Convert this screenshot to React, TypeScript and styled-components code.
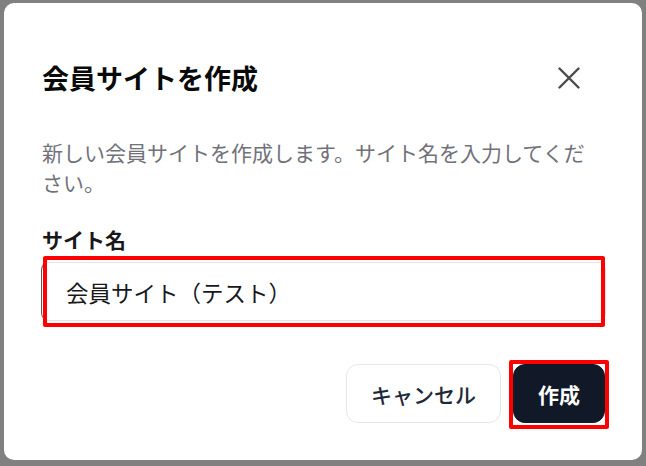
import styled, { createGlobalStyle } from 'styled-components'
import { useState } from 'react'

const GlobalStyle = createGlobalStyle`
  html, body {
    margin: 0;
    padding: 0;
    background: #808080;
  }
  body {
    font-family: "Noto Sans CJK JP", "Noto Sans", sans-serif;
  }
`

const Overlay = styled.div`
  width: 646px;
  height: 466px;
  box-sizing: border-box;
  padding: 3px 4px 6px 4px;
  background: #808080;
`

const Dialog = styled.div`
  box-sizing: border-box;
  height: 457px;
  background: #ffffff;
  border-radius: 10px;
  padding: 54px 37px 37px 37px;
  display: flex;
  flex-direction: column;
`

const Header = styled.div`
  display: flex;
  align-items: center;
  justify-content: space-between;
  height: 42px;
`

const Title = styled.h2`
  margin: 0;
  font-size: 27px;
  line-height: 42px;
  font-weight: 700;
  color: #0a0a0a;
  padding-left: 1px;
`

const CloseButton = styled.button`
  border: none;
  background: none;
  padding: 0;
  margin-right: 25px;
  width: 22px;
  height: 22px;
  display: flex;
  color: #4b4b4b;
  cursor: pointer;
`

const Description = styled.p`
  margin: 38px 0 0 0;
  font-size: 21px;
  line-height: 30px;
  color: #71717a;
  padding-left: 1px;
`

const Label = styled.label`
  display: block;
  margin-top: 27px;
  font-size: 21px;
  line-height: 30px;
  font-weight: 600;
  color: #18181b;
  padding-left: 1px;
`

const Field = styled.div`
  position: relative;
  margin-top: 8px;
  margin-right: -1px;
`

const Input = styled.input`
  display: block;
  box-sizing: border-box;
  width: 100%;
  height: 59px;
  border: 1px solid #e4e4e7;
  border-left-color: #5a5a5a;
  border-radius: 8px;
  padding: 0 0 0 24px;
  font-family: inherit;
  font-size: 22.5px;
  color: #18181b;
  outline: none;
  background: #fff;
`

const Highlight = styled.div<{ $top: number; $right: number; $bottom: number; $left: number }>`
  position: absolute;
  top: ${(p) => p.$top}px;
  right: ${(p) => p.$right}px;
  bottom: ${(p) => p.$bottom}px;
  left: ${(p) => p.$left}px;
  border: 4px solid #ff0000;
  border-radius: 2px;
  pointer-events: none;
`

const Footer = styled.div`
  margin-top: 43px;
  display: flex;
  justify-content: flex-end;
  gap: 12px;
`

const Button = styled.button<{ $primary?: boolean }>`
  position: relative;
  box-sizing: border-box;
  height: 59px;
  padding: 0 24px;
  border-radius: 12px;
  font-family: inherit;
  font-size: 21px;
  font-weight: ${(p) => (p.$primary ? 700 : 500)};
  border: 1px solid ${(p) => (p.$primary ? '#111827' : '#e5e7eb')};
  background: ${(p) => (p.$primary ? '#111827' : '#ffffff')};
  color: ${(p) => (p.$primary ? '#ffffff' : '#1f2937')};
  cursor: pointer;
`

const App = () => {
  const [name, setName] = useState('会員サイト（テスト）')

  return (
    <>
      <GlobalStyle />
      <Overlay>
        <Dialog>
          <Header>
            <Title>会員サイトを作成</Title>
            <CloseButton aria-label="閉じる">
              <svg width="22" height="22" viewBox="0 0 22 22" fill="none">
                <path
                  d="M1.5 1.5 L20.5 20.5 M20.5 1.5 L1.5 20.5"
                  stroke="currentColor"
                  strokeWidth="2.4"
                  strokeLinecap="round"
                />
              </svg>
            </CloseButton>
          </Header>
          <Description>
            新しい会員サイトを作成します。サイト名を入力してください。
          </Description>
          <Label htmlFor="site-name">サイト名</Label>
          <Field>
            <Input
              id="site-name"
              value={name}
              onChange={(e) => setName(e.target.value)}
            />
            <Highlight $top={-6} $right={1} $bottom={-6} $left={2} />
          </Field>
          <Footer>
            <Button>キャンセル</Button>
            <Button $primary>
              作成
              <Highlight $top={-5} $right={-5} $bottom={-7} $left={-5} />
            </Button>
          </Footer>
        </Dialog>
      </Overlay>
    </>
  )
}

export default App
